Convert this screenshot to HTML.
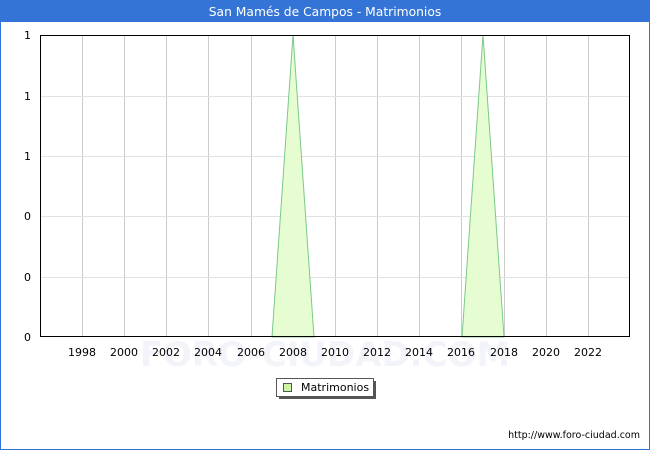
<!DOCTYPE html>
<html><head><meta charset="utf-8"><style>
body{margin:0;width:650px;height:450px;overflow:hidden;background:#fff;font-family:"DejaVu Sans","Liberation Sans",sans-serif;}
</style></head><body>
<svg width="650" height="450" xmlns="http://www.w3.org/2000/svg" font-family="DejaVu Sans, Liberation Sans, sans-serif">
<rect x="0.5" y="0.5" width="649" height="449" fill="#fff" stroke="#3474d6"/>
<rect x="0" y="0" width="650" height="22" fill="#3474d6"/>
<text x="325" y="16" text-anchor="middle" fill="#fff" font-size="12.3">San Mamés de Campos - Matrimonios</text>
<text x="325" y="366" text-anchor="middle" fill="#f3f4fa" font-size="34" font-weight="bold">FORO-CIUDAD.COM</text>
<g stroke="#ccc" stroke-width="1">
<line x1="82.5" y1="35" x2="82.5" y2="337"/><line x1="124.5" y1="35" x2="124.5" y2="337"/><line x1="166.5" y1="35" x2="166.5" y2="337"/><line x1="208.5" y1="35" x2="208.5" y2="337"/><line x1="251.5" y1="35" x2="251.5" y2="337"/><line x1="293.5" y1="35" x2="293.5" y2="337"/><line x1="335.5" y1="35" x2="335.5" y2="337"/><line x1="377.5" y1="35" x2="377.5" y2="337"/><line x1="419.5" y1="35" x2="419.5" y2="337"/><line x1="461.5" y1="35" x2="461.5" y2="337"/><line x1="504.5" y1="35" x2="504.5" y2="337"/><line x1="546.5" y1="35" x2="546.5" y2="337"/><line x1="588.5" y1="35" x2="588.5" y2="337"/>
</g>
<g stroke="#e2e2e2"><line x1="40" y1="96.5" x2="630" y2="96.5"/><line x1="40" y1="156.5" x2="630" y2="156.5"/><line x1="40" y1="216.5" x2="630" y2="216.5"/><line x1="40" y1="277.5" x2="630" y2="277.5"/></g>
<polygon points="272,337 293,35 314,337" fill="#e5fdd0" stroke="#7cc98a"/>
<polygon points="462,337 483,35 504,337" fill="#e5fdd0" stroke="#7cc98a"/>
<rect x="40.5" y="35.5" width="589" height="301" fill="none" stroke="#000"/>
<g font-size="11" fill="#000" text-anchor="end">
<text x="31" y="39">1</text><text x="31" y="100">1</text><text x="31" y="160">1</text><text x="31" y="220">0</text><text x="31" y="281">0</text><text x="31" y="341">0</text>
</g>
<g font-size="11" fill="#000" text-anchor="middle">
<text x="82" y="356">1998</text><text x="124" y="356">2000</text><text x="166" y="356">2002</text><text x="208" y="356">2004</text><text x="251" y="356">2006</text><text x="293" y="356">2008</text><text x="335" y="356">2010</text><text x="377" y="356">2012</text><text x="419" y="356">2014</text><text x="461" y="356">2016</text><text x="504" y="356">2018</text><text x="546" y="356">2020</text><text x="588" y="356">2022</text>
</g>
<rect x="279" y="381" width="97" height="18" fill="#555"/>
<rect x="276.5" y="378.5" width="97" height="18" fill="#fff" stroke="#555"/>
<rect x="283.5" y="383.5" width="8" height="8" fill="#ccf5a8" stroke="#555"/>
<text x="301" y="391" font-size="11">Matrimonios</text>
<text x="640" y="438" font-size="9.5" text-anchor="end">http://www.foro-ciudad.com</text>
</svg>
</body></html>
